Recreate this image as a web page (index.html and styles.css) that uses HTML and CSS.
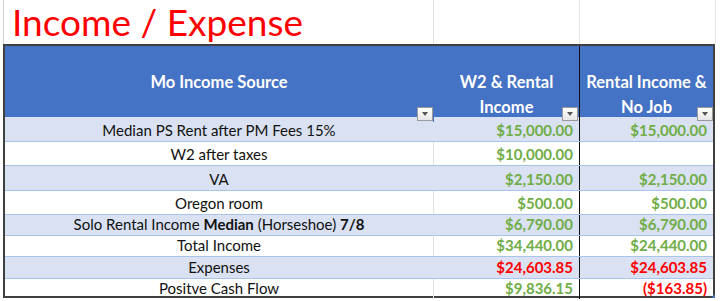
FILE: index.html
```html
<!DOCTYPE html>
<html>
<head>
<meta charset="utf-8">
<link rel="stylesheet" href="styles.css">
</head>
<body>
<div class="sheet">
  <div class="title-row">
    <div class="tcell tcell-a"><span class="title">Income / Expense</span></div>
    <div class="tcell tcell-b"></div>
    <div class="tcell tcell-c"></div>
  </div>
  <div class="table">
    <div class="row head">
      <div class="cell c1"><span>Mo Income Source</span><span class="dd"></span></div>
      <div class="cell c2"><span>W2 &amp; Rental<br>Income</span><span class="dd"></span></div>
      <div class="cell c3"><span>Rental Income &amp;<br>No Job</span><span class="dd"></span></div>
    </div>
    <div class="row band r1">
      <div class="cell c1">Median PS Rent after PM Fees 15%</div>
      <div class="cell c2 num">$15,000.00</div>
      <div class="cell c3 num">$15,000.00</div>
    </div>
    <div class="row plain r2">
      <div class="cell c1">W2 after taxes</div>
      <div class="cell c2 num">$10,000.00</div>
      <div class="cell c3 num"></div>
    </div>
    <div class="row band r3">
      <div class="cell c1">VA</div>
      <div class="cell c2 num">$2,150.00</div>
      <div class="cell c3 num">$2,150.00</div>
    </div>
    <div class="row plain r4">
      <div class="cell c1">Oregon room</div>
      <div class="cell c2 num">$500.00</div>
      <div class="cell c3 num">$500.00</div>
    </div>
    <div class="row band r5">
      <div class="cell c1">Solo Rental Income&nbsp;<b>Median</b>&nbsp;(Horseshoe)&nbsp;<b>7/8</b></div>
      <div class="cell c2 num">$6,790.00</div>
      <div class="cell c3 num">$6,790.00</div>
    </div>
    <div class="row plain r6">
      <div class="cell c1">Total Income</div>
      <div class="cell c2 num">$34,440.00</div>
      <div class="cell c3 num">$24,440.00</div>
    </div>
    <div class="row band r7">
      <div class="cell c1">Expenses</div>
      <div class="cell c2 num neg">$24,603.85</div>
      <div class="cell c3 num neg">$24,603.85</div>
    </div>
    <div class="row plain r8">
      <div class="cell c1">Positve Cash Flow</div>
      <div class="cell c2 num">$9,836.15</div>
      <div class="cell c3 num neg">($163.85)</div>
    </div>
    <span class="handle"></span>
  </div>
</div>
</body>
</html>
```

FILE: styles.css
```css
* { box-sizing: border-box; }
html, body { margin: 0; padding: 0; background: #fff; }
body {
  font-family: Lato, "Open Sans", sans-serif;
  width: 720px;
  height: 301px;
  overflow: hidden;
}
.sheet { position: relative; }

.title-row {
  display: flex;
  height: 44px;
  margin-left: 3px;
}
.tcell { height: 44px; border-right: 1px solid #e3e3e3; }
.tcell-a { width: 431px; border-left: 1px solid #d0d0d0; }
.tcell-b { width: 146px; }
.tcell-c { width: 136px; }
.title {
  display: block;
  color: #ff0000;
  font-size: 37px;
  line-height: 44px;
  padding-left: 8px;
}

.table {
  position: relative;
  margin-left: 3px;
  width: 712px;
  border: 2px solid #404040;
}
.row {
  display: grid;
  grid-template-columns: 429px 146px 133px;
}
.cell {
  display: flex;
  align-items: flex-end;
  font-size: 15px;
  line-height: 18px;
  padding-bottom: 2px;
  color: #111;
}
.c1 { justify-content: center; border-right: 1px solid #e0e0e0; }
.c2 { border-right: 1px solid #111; }
.num {
  justify-content: flex-end;
  padding-right: 6px;
  color: #70ad47;
  font-weight: 700;
}
.neg { color: #ff0000; }

.head { height: 71px; background: #4472c4; }
.head .cell {
  position: relative;
  align-items: flex-start;
  justify-content: center;
  text-align: center;
  color: #fff;
  font-weight: 700;
  font-size: 16.5px;
  padding-top: 24px;
  line-height: 25px;
}
.head .c1 { border-right-color: #4472c4; }
.dd {
  position: absolute;
  right: 0;
  bottom: 1px;
  width: 16px;
  height: 14px;
  border: 1px solid #9a9a9a;
  background: linear-gradient(#ffffff, #e6e6e6);
}
.dd::after {
  content: "";
  position: absolute;
  left: 4px;
  top: 4px;
  border-left: 3.5px solid transparent;
  border-right: 3.5px solid transparent;
  border-top: 4px solid #555;
}
.head .c2 .dd { right: 1px; }

.band { background: #d9e1f2; }
.band .c1 { border-right-color: #d9e1f2; }
.row + .row:not(.r1) { border-top: 1px solid #a9c4eb; }

.r1 { height: 24px; }
.r2 { height: 24px; }
.r3 { height: 25px; }
.r4 { height: 24px; }
.r5 { height: 21px; }
.r6 { height: 21px; }
.r7 { height: 22px; }
.r8 { height: 18px; }

.handle {
  position: absolute;
  right: -2px;
  bottom: -2px;
  width: 0;
  height: 0;
  border-left: 4px solid transparent;
  border-bottom: 4px solid #4472c4;
}
```
